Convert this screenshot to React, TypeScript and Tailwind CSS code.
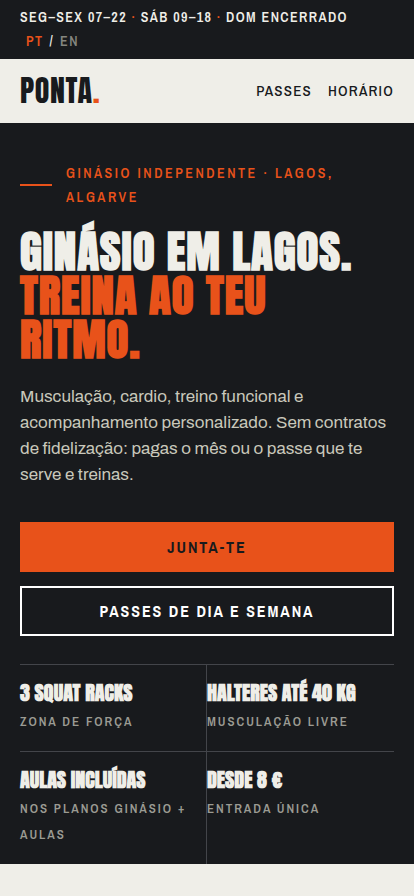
const DISPLAY_FONT = "font-['Anton','Liberation_Sans_Narrow',sans-serif] uppercase";
const LABEL_FONT = "font-['Archivo_Narrow','Liberation_Sans_Narrow',sans-serif] uppercase";

const STATS = [
  { title: "3 squat racks", label: "Zona de força" },
  { title: "Halteres até 40 kg", label: "Musculação livre" },
  { title: "Aulas incluídas", label: "Nos planos ginásio + aulas" },
  { title: "Desde 8 €", label: "Entrada única" },
];

function TopBar() {
  return (
    <div
      className={`${LABEL_FONT} flex flex-wrap border-b border-[#181a1d] px-5 py-[5px] text-sm leading-6 font-semibold tracking-widest text-[#efeee8]`}
    >
      <p>
        Seg–Sex 07–22 <span className="text-[#e8521a]">·</span> Sáb 09–18{" "}
        <span className="text-[#e8521a]">·</span> Dom encerrado
      </p>
      <div className="flex w-full gap-1.5 px-1.5">
        <a href="#pt" className="text-[#e8521a]">
          PT
        </a>
        <span>/</span>
        <a href="#en" className="text-[#85867f]">
          EN
        </a>
      </div>
    </div>
  );
}

function Header() {
  return (
    <header className="flex h-16 items-center justify-between bg-[#efeee8] px-5">
      <a href="#top" className={`${DISPLAY_FONT} text-3xl tracking-[0.02em]`}>
        Ponta<span className="text-[#e8521a]">.</span>
      </a>
      <nav className={`${LABEL_FONT} flex gap-4 text-[15px] font-medium tracking-[0.08em]`}>
        <a href="#passes">Passes</a>
        <a href="#horario">Horário</a>
      </nav>
    </header>
  );
}

function Hero() {
  return (
    <section className="px-5 pt-[38px]">
      <div className="flex items-center gap-3.5">
        <span className="h-0.5 w-8 shrink-0 bg-[#e8521a]" />
        <p className={`${LABEL_FONT} text-sm leading-6 font-semibold tracking-[0.18em] text-[#e8521a]`}>
          Ginásio independente · Lagos, Algarve
        </p>
      </div>

      <h1 className={`${DISPLAY_FONT} mt-5 text-[45px] leading-11 font-bold tracking-[0.02em] text-[#efeee8]`}>
        Ginásio em Lagos.
        <span className="block text-[#e8521a]">Treina ao teu ritmo.</span>
      </h1>

      <p className="mt-[23px] font-['Archivo','Liberation_Sans',sans-serif] text-[17px] leading-[26px] text-[#c9c8bb]">
        Musculação, cardio, treino funcional e acompanhamento personalizado. Sem
        contratos de fidelização: pagas o mês ou o passe que te serve e treinas.
      </p>

      <div className={`${LABEL_FONT} mt-[34px] flex flex-col gap-3.5 text-base font-bold tracking-[0.12em]`}>
        <a
          href="#junta-te"
          className="flex h-[50px] items-center justify-center bg-[#e8521a] text-[#181a1d]"
        >
          Junta-te
        </a>
        <a
          href="#passes"
          className="flex h-[50px] items-center justify-center border-2 border-white text-white"
        >
          Passes de dia e semana
        </a>
      </div>

      <ul className="mt-7 grid grid-cols-2">
        {STATS.map(({ title, label }) => (
          <li
            key={title}
            className="border-t border-[#43454a] pt-3.5 pb-4 odd:border-r"
          >
            <h2 className={`${DISPLAY_FONT} mb-0.5 text-xl leading-7 font-bold text-[#efeee8]`}>{title}</h2>
            <p className={`${LABEL_FONT} text-[13px] leading-[26px] font-semibold tracking-[0.15em] text-[#9b9b93]`}>
              {label}
            </p>
          </li>
        ))}
      </ul>
    </section>
  );
}

export default function App() {
  return (
    <div className="min-h-screen bg-[#efeee8] text-[#181a1d]">
      <div className="bg-[#181a1d]">
        <TopBar />
        <Header />
        <Hero />
      </div>
    </div>
  );
}
